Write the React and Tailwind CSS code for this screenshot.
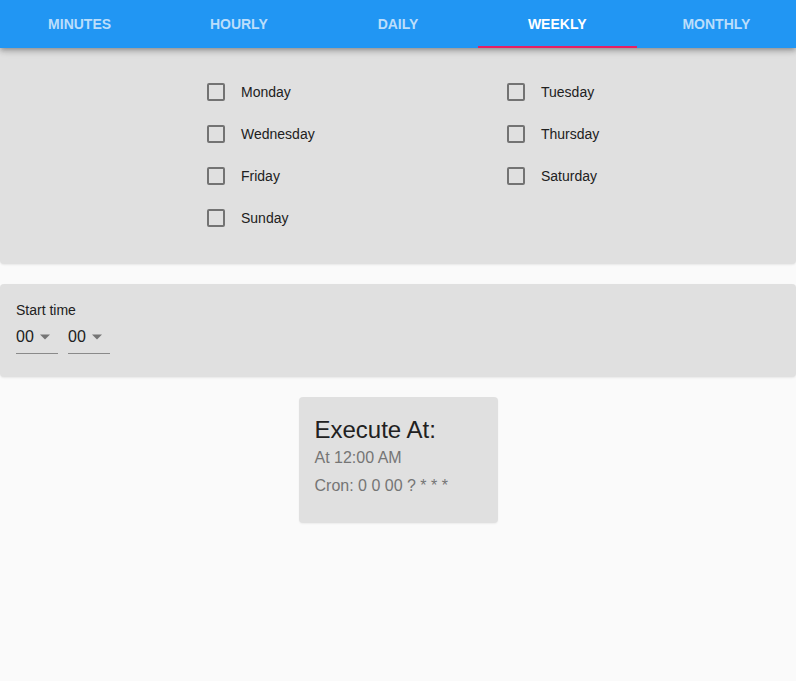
import React from "react";

const tabs = ["MINUTES", "HOURLY", "DAILY", "WEEKLY", "MONTHLY"];
const left = ["Monday", "Wednesday", "Friday", "Sunday"];
const right = ["Tuesday", "Thursday", "Saturday"];

function Check({ label }) {
  return (
    <div className="flex h-[42px] items-center">
      <span className="box-border h-[18px] w-[18px] rounded-[2px] border-2 border-[#737373]" />
      <span className="ml-[16px] text-[14px] text-[#212121]">{label}</span>
    </div>
  );
}

function Select() {
  return (
    <div className="flex h-[33px] w-[42px] items-center border-b border-[#8a8a8a]">
      <span className="text-[16px] text-[#212121]">00</span>
      <svg className="ml-[5px]" width="12" height="6" viewBox="0 0 12 6">
        <path d="M1 0.5 L6 5.5 L11 0.5 Z" fill="#757575" />
      </svg>
    </div>
  );
}

export default function App() {
  return (
    <div
      className="min-h-[681px] w-[796px] bg-[#fafafa]"
      style={{ fontFamily: '"Liberation Sans", Arial, sans-serif' }}
    >
      <div className="relative z-10 flex h-[48px] bg-[#2196f3] shadow-[0_2px_4px_-1px_rgba(0,0,0,0.2),0_4px_5px_0_rgba(0,0,0,0.14),0_1px_10px_0_rgba(0,0,0,0.12)]">
        {tabs.map((t) => (
          <div
            key={t}
            className={
              "relative flex flex-1 items-center justify-center text-[14px] font-bold " +
              (t === "WEEKLY" ? "text-white" : "text-[#bbdefb]")
            }
          >
            {t}
            {t === "WEEKLY" && (
              <span className="absolute bottom-0 left-0 right-0 h-[2px] bg-[#e91e63]" />
            )}
          </div>
        ))}
      </div>

      <div className="rounded-b-[4px] bg-[#e0e0e0] pb-[25px] pl-[207px] pt-[23px] shadow-[0_1px_2px_0_rgba(0,0,0,0.08)]">
        <div className="grid grid-cols-[300px_300px]">
          <div className="flex flex-col">
            {left.map((d) => (
              <Check key={d} label={d} />
            ))}
          </div>
          <div className="flex flex-col">
            {right.map((d) => (
              <Check key={d} label={d} />
            ))}
          </div>
        </div>
      </div>

      <div className="mt-[20px] rounded-[4px] bg-[#e0e0e0] px-[16px] pb-[23px] pt-[18px] shadow-[0_1px_2px_0_rgba(0,0,0,0.08)]">
        <div className="text-[14px] leading-[17px] text-[#212121]">Start time</div>
        <div className="mt-[2px] flex gap-[10px]">
          <Select />
          <Select />
        </div>
      </div>

      <div className="mt-[20px] flex justify-center">
        <div className="w-[199px] rounded-[4px] bg-[#e0e0e0] px-[16px] pb-[25px] pt-[16px] shadow-[0_1px_2px_0_rgba(0,0,0,0.06)]">
          <div className="text-[24px] leading-[33px] text-[#212121]">Execute At:</div>
          <div className="text-[16px] leading-[24px] text-[#757575]">At 12:00 AM</div>
          <div className="mt-[4px] text-[16px] leading-[24px] text-[#757575]">
            Cron: 0 0 00 ? * * *
          </div>
        </div>
      </div>
    </div>
  );
}
